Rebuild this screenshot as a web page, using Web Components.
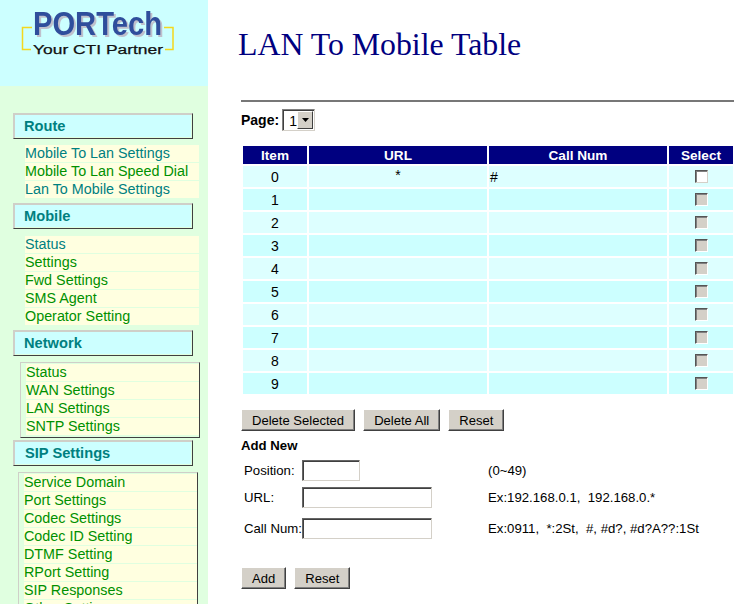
<!DOCTYPE html>
<html><head><meta charset="utf-8"><title>LAN To Mobile Table</title>
<style>
html,body{margin:0;padding:0;height:604px;overflow:hidden;background:#fff;font-family:"Liberation Sans",Arial,sans-serif}
</style></head><body>
<pt-app></pt-app>
<script>
const F='"Liberation Sans",Arial,sans-serif';
class PtLogo extends HTMLElement{constructor(){super();this.attachShadow({mode:'open'}).innerHTML=`<style>:host{display:block;height:86px;background:#ccffff}svg{display:block}</style>
<svg width="208" height="86" viewBox="0 0 208 86">
<path d="M32 27.5H22.5V49.5H31M164 27.5H173V49.5H165" fill="none" stroke="#f4d81e" stroke-width="1.5"/>
<text x="33" y="35" font-family="Liberation Sans" font-weight="700" font-size="34" textLength="129" lengthAdjust="spacingAndGlyphs" fill="#2f4e9c" style="filter:drop-shadow(2px 2px 0 #bfc0cc)">PORTech</text>
<text x="33" y="54" font-family="Liberation Sans" font-size="12.5" textLength="130" lengthAdjust="spacingAndGlyphs" fill="#111" stroke="#111" stroke-width=".25">Your CTI Partner</text>
</svg>`}}
customElements.define('pt-logo',PtLogo);

class PtHead extends HTMLElement{constructor(){super();this.attachShadow({mode:'open'}).innerHTML=`<style>:host{display:block;box-sizing:border-box;width:180px;height:26px;margin-left:13px;border:solid 1px;border-color:#cfcfc8 #404040 #404040 #cfcfc8;background:#ccffff;box-shadow:inset 1px 1px 0 #cfcfc8,inset -1px -1px 0 #e0ffe0;padding:3px 0 0 10px;font:700 14.67px/18px ${F};color:#008080}</style><slot></slot>`}}
customElements.define('pt-head',PtHead);

class PtItem extends HTMLElement{constructor(){super();this.attachShadow({mode:'open'}).innerHTML=`<style>:host{display:block;box-sizing:border-box;height:17px;margin-bottom:1px;background:#ffffe0;font:14.35px/17px ${F};color:#009000;white-space:nowrap}:host([v]){color:#008080}</style><slot></slot>`}}
customElements.define('pt-item',PtItem);

class PtList extends HTMLElement{constructor(){super();this.attachShadow({mode:'open'}).innerHTML=`<style>:host{display:block;box-sizing:border-box;background:#e0ffe0}
:host([plain]){width:174px;margin-left:25px}
:host([boxed]){width:180px;padding:1px 0 1px 5px;border:solid 1px;border-color:#cfcfc8 #404040 #404040 #cfcfc8}</style><slot></slot>`}}
customElements.define('pt-list',PtList);

class PtSidebar extends HTMLElement{constructor(){super();
const list=(a,attr,st,v)=>`<pt-list ${attr} style="${st||''}">`+a.map((t,i)=>`<pt-item ${v&&v.includes(i)?'v':''}>${t}</pt-item>`).join('')+`</pt-list>`;
this.attachShadow({mode:'open'}).innerHTML=`<style>:host{display:block;width:208px;height:604px;overflow:hidden;background:#e0ffe0;flex:none}.s{height:27px}</style>
<pt-logo></pt-logo><div class="s"></div>
<pt-head>Route</pt-head>`+list(['Mobile To Lan Settings','Mobile To Lan Speed Dial','Lan To Mobile Settings'],'plain','margin-top:6px;margin-bottom:5px',[0,2])+
`<pt-head>Mobile</pt-head>`+list(['Status','Settings','Fwd Settings','SMS Agent','Operator Setting'],'plain','margin-top:7px;margin-bottom:5px',[0])+
`<pt-head>Network</pt-head>`+list(['Status','WAN Settings','LAN Settings','SNTP Settings'],'boxed','margin:6px 0 2px 20px')+
`<pt-head style="padding-left:11px">SIP Settings</pt-head>`+list(['Service Domain','Port Settings','Codec Settings','Codec ID Setting','DTMF Setting','RPort Setting','SIP Responses','Other Settings'],'boxed','margin:6px 0 0 18px')}}
customElements.define('pt-sidebar',PtSidebar);

class PtButton extends HTMLElement{constructor(){super();this.attachShadow({mode:'open'}).innerHTML=`<style>:host{display:inline-block;box-sizing:border-box;height:22px;padding:0 10px;background:#d4d0c8;border:solid 1px;border-color:#fff #404040 #404040 #fff;box-shadow:inset -1px -1px 0 #808080;font:13.05px/21px ${F};color:#000;text-align:center}</style><slot></slot>`}}
customElements.define('pt-button',PtButton);

class PtSelect extends HTMLElement{constructor(){super();this.attachShadow({mode:'open'}).innerHTML=`<style>:host{display:inline-flex;box-sizing:border-box;width:33px;height:22px;border:solid 1px;border-color:#808080 #d4d0c8 #d4d0c8 #808080;box-shadow:inset 1px 1px 0 #404040;background:#fff;font:14px/18px ${F};color:#000;padding:1px 1px 1px 1px}
.t{flex:1;padding:1px 0 0 5px}.b{width:16px;box-sizing:border-box;background:#d4d0c8;border:solid 1px;border-color:#fff #404040 #404040 #fff;display:flex;align-items:center;justify-content:center}
svg{display:block}</style><span class="t"><slot></slot></span><span class="b"><svg width="7" height="4"><path d="M0 0H7L3.5 4Z" fill="#000"/></svg></span>`}}
customElements.define('pt-select',PtSelect);

class PtCheck extends HTMLElement{constructor(){super();this.attachShadow({mode:'open'}).innerHTML=`<style>:host{display:block;box-sizing:border-box;width:13px;height:13px;margin:0 auto;background:#d4d0c8;border:solid 1px;border-color:#555 #fff #fff #555;box-shadow:inset 1px 1px 0 #808080}
:host([on]){background:#fff;border-color:#555 #d4d0c8 #d4d0c8 #555}</style>`}}
customElements.define('pt-check',PtCheck);

class PtInput extends HTMLElement{constructor(){super();this.attachShadow({mode:'open'}).innerHTML=`<style>:host{display:block;box-sizing:border-box;height:21px;background:#fff;border:solid 1px;border-color:#666 #d4d0c8 #d4d0c8 #666;box-shadow:inset 1px 1px 0 #404040}</style>`}}
customElements.define('pt-input',PtInput);

class PtTable extends HTMLElement{constructor(){super();
let r='';for(let i=0;i<10;i++){r+=`<tr class="${i%2?'o':'e'}"><td class="c">${i}</td><td class="c u">${i==0?'*':''}</td><td class="n">${i==0?'#':''}</td><td><pt-check ${i==0?'on':''}></pt-check></td></tr>`}
this.attachShadow({mode:'open'}).innerHTML=`<style>:host{display:block;font:14px/16px ${F};margin-left:0}
table{border-collapse:separate;border-spacing:2px;table-layout:fixed;width:494px}
th{background:#000080;color:#fff;font:700 13.6px/16px ${F};height:18px;padding:1px 0 0;box-sizing:border-box}
td{height:21px;padding:0;box-sizing:border-box}tr.e td{background:#ddffff}tr.o td{background:#ccffff}
.c{text-align:center}.u{vertical-align:top;padding-top:1px}.n{padding-left:1px}
</style><table><colgroup><col style="width:64px"><col style="width:178px"><col style="width:178px"><col style="width:64px"></colgroup>
<tr><th>Item</th><th>URL</th><th>Call Num</th><th>Select</th></tr>${r}</table>`}}
customElements.define('pt-table',PtTable);

class PtForm extends HTMLElement{constructor(){super();this.attachShadow({mode:'open'}).innerHTML=`<style>:host{display:block;font:13.2px/15px ${F};color:#000}
.t{font-weight:700;line-height:18px;margin:6px 0 5px 0}
.g{display:grid;grid-template-columns:58px 186px auto;grid-template-rows:21px 21px 28px;padding-left:3px;row-gap:6px}
.g>div{display:flex;align-items:center}
.btns{display:flex;gap:8px}</style>
<div class="t">Add New</div>
<div class="g">
<div>Position:</div><div><pt-input style="width:58px"></pt-input></div><div>(0~49)</div>
<div>URL:</div><div><pt-input style="width:130px"></pt-input></div><div>Ex:192.168.0.1,&nbsp; 192.168.0.*</div>
<div>Call Num:</div><div><pt-input style="width:130px"></pt-input></div><div>Ex:0911,&nbsp; *:2St,&nbsp; #, #d?, #d?A??:1St</div>
</div>
<div class="btns" style="margin-top:25px"><pt-button>Add</pt-button><pt-button>Reset</pt-button></div>`}}
customElements.define('pt-form',PtForm);

class PtMain extends HTMLElement{constructor(){super();this.attachShadow({mode:'open'}).innerHTML=`<style>:host{display:block;flex:1;min-width:0;padding:27px 22px 0 30px;box-sizing:border-box;background:#fff}
h1{font:400 31.8px/36px "Liberation Serif",serif;color:#000080;margin:0;white-space:nowrap}
hr{height:2px;border:0;background:#777;margin:37px 0 7px 3px;width:493px}
.p{display:flex;align-items:center;gap:4px;margin-left:3px;font:700 14px/22px ${F};height:22px}
.p pt-select{margin-left:-1px}
.tw{margin:13px 0 0 3px}.btns{display:flex;gap:8px;margin:13px 0 0 3px}.f{margin-left:3px}</style>
<h1>LAN To Mobile Table</h1><hr>
<div class="p">Page: <pt-select>1</pt-select></div>
<div class="tw"><pt-table></pt-table></div>
<div class="btns"><pt-button>Delete Selected</pt-button><pt-button>Delete All</pt-button><pt-button>Reset</pt-button></div>
<div class="f"><pt-form></pt-form></div>`}}
customElements.define('pt-main',PtMain);

class PtApp extends HTMLElement{constructor(){super();this.attachShadow({mode:'open'}).innerHTML=`<style>:host{display:flex;width:756px;height:604px;overflow:hidden}</style><pt-sidebar></pt-sidebar><pt-main></pt-main>`}}
customElements.define('pt-app',PtApp);
</script></body></html>
